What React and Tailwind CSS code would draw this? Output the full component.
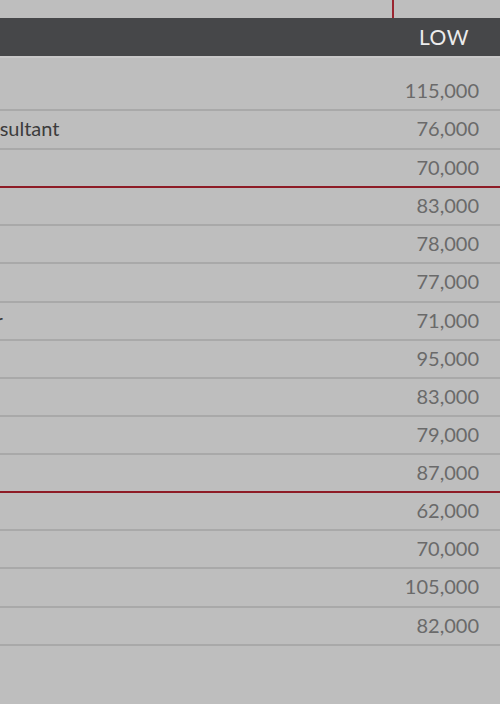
const rows = [
  { low: "115,000", h: "h-[38px]", line: "border-[#a9a9a9]" },
  { low: "76,000", h: "h-[39px]", line: "border-[#a9a9a9]", label: "Consultant", shift: "ml-[-36px]" },
  { low: "70,000", h: "h-[38px]", line: "border-[#8e1c26]" },
  { low: "83,000", h: "h-[38px]", line: "border-[#a9a9a9]" },
  { low: "78,000", h: "h-[38px]", line: "border-[#a9a9a9]" },
  { low: "77,000", h: "h-[39px]", line: "border-[#a9a9a9]" },
  { low: "71,000", h: "h-[38px]", line: "border-[#a9a9a9]", label: "Writer", shift: "ml-[-54px]" },
  { low: "95,000", h: "h-[38px]", line: "border-[#a9a9a9]" },
  { low: "83,000", h: "h-[38px]", line: "border-[#a9a9a9]" },
  { low: "79,000", h: "h-[38px]", line: "border-[#a9a9a9]" },
  { low: "87,000", h: "h-[38px]", line: "border-[#8e1c26]" },
  { low: "62,000", h: "h-[38px]", line: "border-[#a9a9a9]" },
  { low: "70,000", h: "h-[38px]", line: "border-[#a9a9a9]" },
  { low: "105,000", h: "h-[39px]", line: "border-[#a9a9a9]" },
  { low: "82,000", h: "h-[38px]", line: "border-[#a9a9a9]" },
];

export default function App() {
  return (
    <div className="w-[500px] h-[704px] overflow-hidden bg-[#bebebe] font-['Lato',sans-serif]">
      {/* column divider above the header */}
      <div className="h-[18px] pl-[392px]">
        <div className="w-[2px] h-full bg-[#9a2530]" />
      </div>

      <div className="h-[38px] bg-[#464749] flex items-center justify-end pr-[31px] text-[21px] text-[#ececec] tracking-wide">
        LOW
      </div>

      <div className="h-[17px] border-t-2 border-[#c8c8c8]" />

      {rows.map((r, i) => (
        <div
          key={i}
          className={`${r.h} border-b-2 ${r.line} flex items-center justify-between pr-[21px] pb-[3px]`}
        >
          <span className={`${r.shift || ""} text-[20px] text-[#3c3c3c] whitespace-nowrap`}>
            {r.label || ""}
          </span>
          <span className="text-[20px] text-[#6a6a6a]">{r.low}</span>
        </div>
      ))}
    </div>
  );
}
